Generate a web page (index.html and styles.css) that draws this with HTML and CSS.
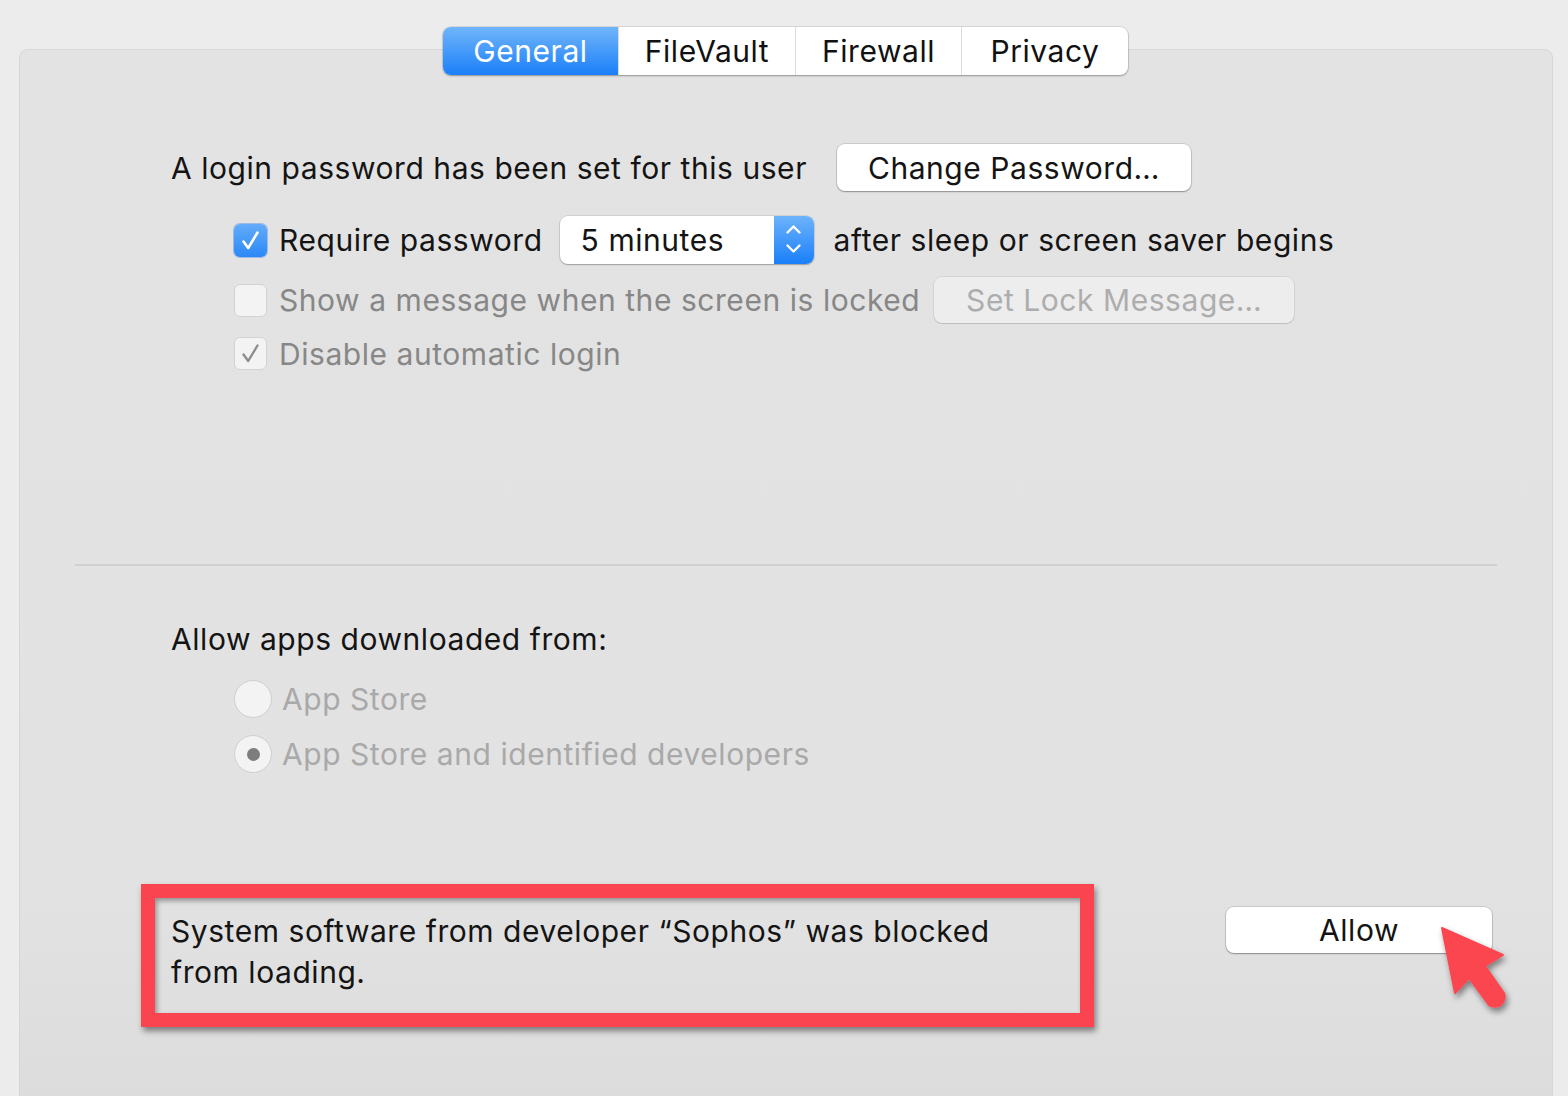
FILE: index.html
```html
<!DOCTYPE html>
<html lang="en">
<head>
<meta charset="utf-8">
<title>Security &amp; Privacy</title>
<link rel="stylesheet" href="styles.css">
</head>
<body>
<div class="window">
  <nav class="tabs">
    <div class="tab tab-general active">General</div>
    <div class="tab tab-filevault">FileVault</div>
    <div class="tab tab-firewall">Firewall</div>
    <div class="tab tab-privacy">Privacy</div>
  </nav>
  <section class="panel">
    <div class="login-row">
      <span class="label">A login password has been set for this user</span>
      <button class="btn btn-change">Change Password…</button>
    </div>

    <div class="options">
      <div class="opt opt-require">
        <span class="check check-on">
          <svg viewBox="0 0 33 33" width="33" height="33"><path d="M9.5 17.5 L14.2 24 L23.5 8.5" fill="none" stroke="#fff" stroke-width="2.6" stroke-linecap="round" stroke-linejoin="round"/></svg>
        </span>
        <span class="label">Require password</span>
        <div class="popup">
          <span class="popup-value">5 minutes</span>
          <span class="popup-stepper">
            <svg viewBox="0 0 40 48" width="40" height="48"><path d="M13.5 16.5 L19.5 10.5 L25.5 16.5 M13.5 29.5 L19.5 35.5 L25.5 29.5" fill="none" stroke="#fff" stroke-width="2.4" stroke-linecap="round" stroke-linejoin="round"/></svg>
          </span>
        </div>
        <span class="label">after sleep or screen saver begins</span>
      </div>
      <div class="opt opt-message">
        <span class="check check-off"></span>
        <span class="label dim">Show a message when the screen is locked</span>
        <button class="btn btn-disabled">Set Lock Message…</button>
      </div>
      <div class="opt opt-autologin">
        <span class="check check-off">
          <svg viewBox="0 0 33 33" width="33" height="33"><path d="M9.5 17.5 L14.2 24 L23.5 8.5" fill="none" stroke="#8e8e8e" stroke-width="2.4" stroke-linecap="round" stroke-linejoin="round"/></svg>
        </span>
        <span class="label dim">Disable automatic login</span>
      </div>
    </div>

    <div class="separator"></div>

    <div class="gatekeeper">
      <div class="label">Allow apps downloaded from:</div>
      <div class="radios">
        <div class="radio-row">
          <span class="radio"></span>
          <span class="label faint">App Store</span>
        </div>
        <div class="radio-row">
          <span class="radio radio-on"><span class="dot"></span></span>
          <span class="label faint">App Store and identified developers</span>
        </div>
      </div>
    </div>

    <div class="blocked">
      <div class="blocked-msg">
        <p>System software from developer “Sophos” was blocked<br>from loading.</p>
      </div>
      <button class="btn btn-allow">Allow</button>
    </div>
  </section>
</div>

<svg class="pointer" width="1568" height="1096" viewBox="0 0 1568 1096">
  <defs>
    <filter id="sh" x="-50%" y="-50%" width="200%" height="200%">
      <feDropShadow dx="2" dy="4" stdDeviation="3" flood-color="#000" flood-opacity="0.45"/>
    </filter>
  </defs>
  <g filter="url(#sh)" fill="#fb4550">
    <path d="M1442 928 L1455 993 L1469 978 L1489 1005 A10 10 0 0 0 1504 993 L1485 966 L1503 955 Z" stroke="#fb4550" stroke-width="2" stroke-linejoin="round"/>
  </g>
</svg>
</body>
</html>
```

FILE: styles.css
```css
html, body {
  margin: 0;
  padding: 0;
}

body {
  width: 1568px;
  height: 1096px;
  overflow: hidden;
  background: #ececec;
  font-family: "Inter", "Noto Sans", "Liberation Sans", sans-serif;
  font-size: 30px;
  letter-spacing: 0.55px;
  color: #141414;
  position: relative;
}

.window {
  padding-top: 27px;
}

/* ---------- tabs ---------- */
.tabs {
  position: relative;
  z-index: 2;
  display: flex;
  width: 685px;
  height: 48px;
  margin-left: 443px;
  border-radius: 8px;
  background: #fff;
  box-shadow: 0 0 0 1px rgba(0, 0, 0, 0.08), 0 1px 2px rgba(0, 0, 0, 0.3);
  overflow: hidden;
}

.tab {
  display: flex;
  align-items: center;
  justify-content: center;
  height: 48px;
  color: #111;
  border-left: 1px solid #dcdcdc;
  box-sizing: border-box;
}

.tab-general { width: 175px; border-left: none; }
.tab-filevault { width: 177px; }
.tab-firewall { width: 166px; }
.tab-privacy { width: 167px; }

.tab.active {
  color: #fff;
  background: linear-gradient(#70b5fa, #1b7ff9);
}

/* ---------- panel ---------- */
.panel {
  margin: -26px 15px 0 19px;
  height: 1060px;
  box-sizing: border-box;
  border: 1px solid #d7d7d7;
  border-radius: 9px;
  background: linear-gradient(#e3e3e3 0%, #e2e2e2 80%, #dcdcdc 100%);
  padding-top: 94px;
}

.label {
  white-space: nowrap;
}

.dim { color: #878787; }
.faint { color: #a9a9a9; }

.btn {
  font: inherit;
  letter-spacing: inherit;
  border: none;
  border-radius: 8px;
  background: #fff;
  color: #141414;
  box-shadow: 0 0 0 1px rgba(0, 0, 0, 0.1), 0 1px 1.5px rgba(0, 0, 0, 0.3);
  padding: 0;
}

.login-row {
  display: flex;
  align-items: center;
  height: 47px;
  padding-left: 151px;
  gap: 30px;
}

.btn-change {
  width: 354px;
  height: 47px;
}

/* ---------- options ---------- */
.options {
  padding-left: 214px;
}

.opt {
  display: flex;
  align-items: center;
}

.opt-require {
  margin-top: 25px;
  height: 48px;
}

.opt-message {
  margin-top: 13px;
  height: 46px;
}

.opt-autologin {
  margin-top: 14px;
  height: 33px;
}

.check {
  width: 33px;
  height: 33px;
  box-sizing: border-box;
  border-radius: 6px;
  margin-right: 12px;
  flex: none;
  display: flex;
}

.check-on {
  background: linear-gradient(#63acfa, #2b88f6);
  box-shadow: 0 0 0 1px rgba(30, 110, 220, 0.35);
}

.check-off {
  background: #f3f3f3;
  border: 1px solid #d2d2d2;
}

.check-off svg {
  margin: -1px;
}

.popup {
  display: flex;
  margin-left: 17px;
  margin-right: 20px;
  width: 254px;
  height: 48px;
  border-radius: 8px;
  background: #fff;
  box-shadow: 0 0 0 1px rgba(0, 0, 0, 0.08), 0 1px 1.5px rgba(0, 0, 0, 0.25);
  overflow: hidden;
}

.popup-value {
  flex: 1;
  display: flex;
  align-items: center;
  padding-left: 21px;
}

.popup-stepper {
  width: 40px;
  height: 48px;
  background: linear-gradient(#6db3fb, #1a7ff9);
  display: flex;
}

.btn-disabled {
  margin-left: 14px;
  width: 360px;
  height: 46px;
  background: #ededed;
  color: #adadad;
  box-shadow: 0 0 0 1px rgba(0, 0, 0, 0.06), 0 1px 1px rgba(0, 0, 0, 0.12);
}

/* ---------- separator ---------- */
.separator {
  margin: 194px 55px 0 55px;
  height: 2px;
  background: #d0d0d0;
}

/* ---------- gatekeeper ---------- */
.gatekeeper {
  margin-top: 55px;
  padding-left: 151px;
  line-height: 36px;
}

.radios {
  margin-top: 23px;
  padding-left: 63px;
}

.radio-row {
  display: flex;
  align-items: center;
  height: 38px;
}

.radio-row + .radio-row {
  margin-top: 17px;
}

.radio {
  width: 38px;
  height: 38px;
  box-sizing: border-box;
  border-radius: 50%;
  background: #f3f3f3;
  border: 1px solid #cfcfcf;
  margin-right: 10px;
  display: flex;
  align-items: center;
  justify-content: center;
  flex: none;
}

.dot {
  width: 13px;
  height: 13px;
  border-radius: 50%;
  background: #7d7d7d;
}

/* ---------- blocked ---------- */
.blocked {
  display: flex;
  align-items: flex-start;
  margin-top: 111px;
  padding-left: 121px;
  padding-right: 60px;
}

.blocked-msg {
  width: 953px;
  height: 143px;
  box-sizing: border-box;
  border: 14px solid #fa4550;
  padding: 13px 0 0 16px;
  box-shadow: 2px 4px 6px rgba(0, 0, 0, 0.45), inset 2px 3px 5px rgba(0, 0, 0, 0.35);
}

.blocked-msg p {
  margin: 0;
  line-height: 41px;
}

.btn-allow {
  margin-left: auto;
  margin-top: 23px;
  width: 266px;
  height: 46px;
}

/* ---------- annotation pointer ---------- */
.pointer {
  position: absolute;
  left: 0;
  top: 0;
  pointer-events: none;
}
```
